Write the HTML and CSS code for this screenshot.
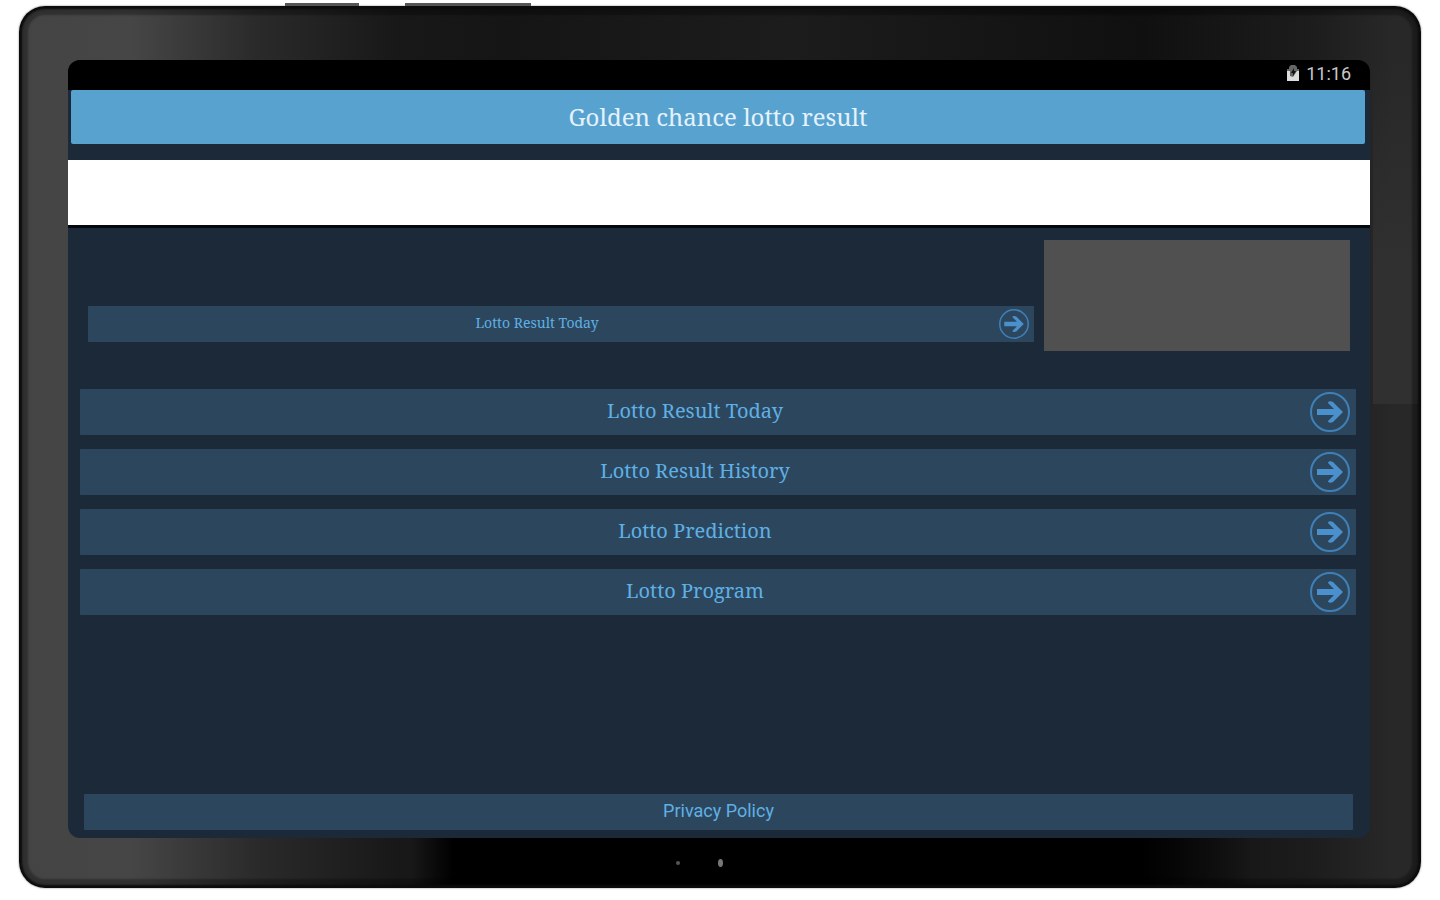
FILE: index.html
```html
<!DOCTYPE html>
<html lang="en">
<head>
    <meta charset="UTF-8">
    <meta name="viewport" content="width=device-width, initial-scale=1.0">
    <title>Golden chance lotto result</title>
    <link rel="stylesheet" href="styles.css">
</head>
<body>
    <svg class="sprite" aria-hidden="true">
        <symbol id="arrow" viewBox="0 0 40 40">
            <circle cx="20" cy="20" r="19" fill="none" stroke="#3f80b8" stroke-width="2"/>
            <path d="M7 17h17l-6-6c0-2 3-2 5-1l10 10-10 10c-2 1-5 1-5-1l6-6H7z" fill="#4a90cc"/>
        </symbol>
    </svg>

    <div class="tablet">
        <span class="side-key side-key-power"></span>
        <span class="side-key side-key-volume"></span>

        <div class="screen">
            <div class="status-bar">
                <svg class="battery" viewBox="0 0 12 18">
                    <path d="M0 5h2V3l2-2h4l2 2v2h2v12H0z" fill="#666"/>
                    <path d="M0 7h3v5l3 1 4-6h2v10H0z" fill="#ddd"/>
                    <path d="M7 4L4 9h2v3l3-5H7z" fill="#111"/>
                </svg>
                <span class="clock">11:16</span>
            </div>

            <header class="header">
                <h1>Golden chance lotto result</h1>
            </header>

            <div class="banner"></div>

            <main>
                <section class="featured">
                    <button type="button" class="btn btn-small">
                        <span>Lotto Result Today</span>
                        <svg class="arrow"><use href="#arrow"/></svg>
                    </button>
                    <div class="ad-box"></div>
                </section>

                <nav class="menu">
                    <button type="button" class="btn">
                        <span>Lotto Result Today</span>
                        <svg class="arrow"><use href="#arrow"/></svg>
                    </button>
                    <button type="button" class="btn">
                        <span>Lotto Result History</span>
                        <svg class="arrow"><use href="#arrow"/></svg>
                    </button>
                    <button type="button" class="btn">
                        <span>Lotto Prediction</span>
                        <svg class="arrow"><use href="#arrow"/></svg>
                    </button>
                    <button type="button" class="btn">
                        <span>Lotto Program</span>
                        <svg class="arrow"><use href="#arrow"/></svg>
                    </button>
                </nav>
            </main>

            <footer>
                <button type="button" class="btn btn-privacy"><span>Privacy Policy</span></button>
            </footer>
        </div>

        <div class="sensors">
            <span class="sensor"></span>
            <span class="sensor sensor-camera"></span>
        </div>
    </div>
</body>
</html>
```

FILE: styles.css
```css
:root {
    --screen-color: #1c2938;
    --button-color: #2c475d;
    --header-color: #58a2d0;
    --text-color: #5fb0e6;
}

* {
    box-sizing: border-box;
}

body {
    margin: 0;
    min-height: 100vh;
    padding: 6px 19px 12px;
    display: flex;
    background-color: white;
    font-family: 'Noto Serif', 'DejaVu Serif Condensed', 'DejaVu Serif', serif;
}

.sprite {
    position: absolute;
    width: 0;
    height: 0;
}

.tablet {
    position: relative;
    flex: 1;
    display: flex;
    flex-direction: column;
    padding: 54px 51px 0 49px;
    border-radius: 26px;
    background:
        linear-gradient(90deg, transparent 28%, black 31%, black 80%, transparent 88%) bottom / 100% 50px no-repeat,
        linear-gradient(transparent, #303030 60%) right 0 top 54px / 48px 344px no-repeat,
        linear-gradient(90deg, #444, #464646 8%, #2a2a2a 17%, #181818 27%, #151515 35%, #1c1c1c 55%, #101010 80%, #1c1c1c 92%, #282828 98%);
    box-shadow: inset 0 0 2px 3px #0c0c0c, inset 0 0 2px 9px rgba(0, 0, 0, 0.3), 0 0 2px #777;
}

.side-key {
    position: absolute;
    top: -3px;
    height: 3px;
    background-color: #555;
}

.side-key-power {
    left: 266px;
    width: 74px;
}

.side-key-volume {
    left: 386px;
    width: 126px;
}

.screen {
    flex: 1;
    display: flex;
    flex-direction: column;
    overflow: hidden;
    border-radius: 12px;
    background-color: var(--screen-color);
}

.status-bar {
    display: flex;
    align-items: center;
    justify-content: flex-end;
    gap: 7px;
    height: 30px;
    padding: 0 19px 4px 0;
    background-color: black;
    color: #c8c8c8;
    font-family: Roboto, sans-serif;
    font-size: 18px;
}

.battery {
    width: 12px;
    height: 18px;
}

.header {
    margin: 0 5px 16px 3px;
    border-radius: 2px;
    background-color: var(--header-color);
}

h1 {
    margin: 0;
    color: #e4f2fc;
    font-size: 24px;
    font-weight: normal;
    line-height: 54px;
    text-align: center;
}

.banner {
    height: 68px;
    border-bottom: 3px solid #03080e;
    background-color: white;
}

main {
    flex: 1;
}

.featured {
    display: flex;
    align-items: flex-end;
    gap: 10px;
    padding: 12px 20px 38px;
}

.ad-box {
    width: 306px;
    height: 111px;
    background-color: #505050;
}

.menu {
    display: flex;
    flex-direction: column;
    gap: 14px;
    padding: 0 14px 0 12px;
}

.btn {
    display: flex;
    align-items: center;
    width: 100%;
    height: 46px;
    padding: 0 6px 0 0;
    border: none;
    border-radius: 1px;
    background-color: var(--button-color);
    color: var(--text-color);
    font-family: inherit;
    font-size: 20px;
    cursor: pointer;
}

.btn span {
    flex: 1;
    padding-bottom: 3px;
}

.arrow {
    width: 40px;
    height: 40px;
}

.btn-small {
    flex: 1;
    height: 36px;
    margin-bottom: 9px;
    padding-right: 5px;
    font-size: 14px;
}

.btn-small .arrow {
    width: 30px;
    height: 30px;
    margin-left: 13px;
}

footer {
    padding: 0 17px 8px 16px;
}

.btn-privacy {
    height: 36px;
    padding: 0;
    font-family: Roboto, sans-serif;
    font-size: 18px;
}

.sensors {
    display: flex;
    align-items: center;
    justify-content: center;
    gap: 38px;
    height: 50px;
    padding-right: 40px;
}

.sensor {
    width: 4px;
    height: 4px;
    border-radius: 50%;
    background-color: #555;
}

.sensor-camera {
    width: 5px;
    height: 8px;
    background-color: #777;
}
```
